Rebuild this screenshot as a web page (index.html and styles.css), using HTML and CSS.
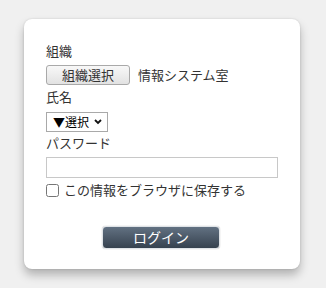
FILE: index.html
```html
<!DOCTYPE html>
<html lang="ja">
<head>
<meta charset="utf-8">
<link rel="stylesheet" href="styles.css">
</head>
<body>
<div class="card">
  <div class="label">組織</div>
  <div class="org-row">
    <button class="btn-org" type="button">組織選択</button>
    <span class="org-name">情報システム室</span>
  </div>
  <div class="label label-name">氏名</div>
  <span class="sel-wrap">
    <select class="sel"><option>▼選択</option></select>
    <svg class="chev" width="8" height="6" viewBox="0 0 8 6"><path d="M1 1 L4 4 L7 1" fill="none" stroke="#111" stroke-width="1.8"/></svg>
  </span>
  <div class="label label-pw">パスワード</div>
  <input class="pw" type="password">
  <label class="remember"><input type="checkbox" class="chk"><span>この情報をブラウザに保存する</span></label>
  <div class="actions"><button class="btn-login" type="button">ログイン</button></div>
</div>
</body>
</html>
```
FILE: styles.css
```css
html, body { margin: 0; padding: 0; }
body {
  background: #f0f0f0;
  width: 326px;
  height: 288px;
  font-family: "Noto Sans CJK JP", "Noto Sans", sans-serif;
  font-size: 13px;
  color: #333;
}
.card {
  box-sizing: border-box;
  margin: 19px 0 0 24px;
  width: 276px;
  height: 250px;
  background: #fff;
  border-radius: 8px;
  box-shadow: 0 6px 10px rgba(0,0,0,0.26), 0 0 2px rgba(0,0,0,0.15);
  padding: 24px 22px 0 22px;
  display: flex;
  flex-direction: column;
  align-items: flex-start;
}
.label { line-height: 16px; height: 16px; }
.org-row {
  margin-top: 6px;
  display: flex;
  align-items: center;
  gap: 8px;
  height: 20px;
}
.btn-org {
  box-sizing: border-box;
  width: 84px;
  height: 20px;
  padding: 0;
  border: 1px solid #a9a9a9;
  border-radius: 3px;
  background: linear-gradient(#f8f8f8, #e2e2e2);
  font-family: inherit;
  font-size: 13px;
  line-height: 18px;
  color: #333;
}
.org-name { line-height: 16px; }
.label-name { margin-top: 4px; }
.sel-wrap {
  position: relative;
  display: block;
  margin-top: 7px;
  width: 62px;
  height: 20px;
}
.sel {
  box-sizing: border-box;
  -webkit-appearance: none;
  appearance: none;
  display: block;
  width: 62px;
  height: 20px;
  border: 1px solid #a9a9a9;
  border-radius: 0;
  background: #fff;
  font-family: inherit;
  font-size: 12px;
  line-height: 18px;
  color: #000;
  padding: 0 0 0 6px;
  outline: none;
}
.chev {
  position: absolute;
  right: 6px;
  top: 7px;
  pointer-events: none;
}
.label-pw { margin-top: 3px; }
.pw {
  box-sizing: border-box;
  margin-top: 6px;
  width: 232px;
  height: 21px;
  border: 1px solid #c8c8c8;
  padding: 0 2px;
  outline: none;
}
.remember {
  margin-top: 4px;
  display: flex;
  align-items: center;
  gap: 5px;
  line-height: 16px;
}
.chk { margin: 0; width: 13px; height: 13px; }
.actions {
  align-self: stretch;
  display: flex;
  justify-content: center;
  margin-top: 28px;
  padding-right: 2px;
}
.btn-login {
  box-sizing: border-box;
  width: 118px;
  height: 23px;
  padding: 0;
  border: 1px solid #dfe3e7;
  border-radius: 4px;
  background: linear-gradient(#627182, #36424f);
  color: #fff;
  font-family: inherit;
  font-size: 14px;
  line-height: 21px;
  box-shadow: 0 0 1px rgba(0,0,0,0.4);
}
```
